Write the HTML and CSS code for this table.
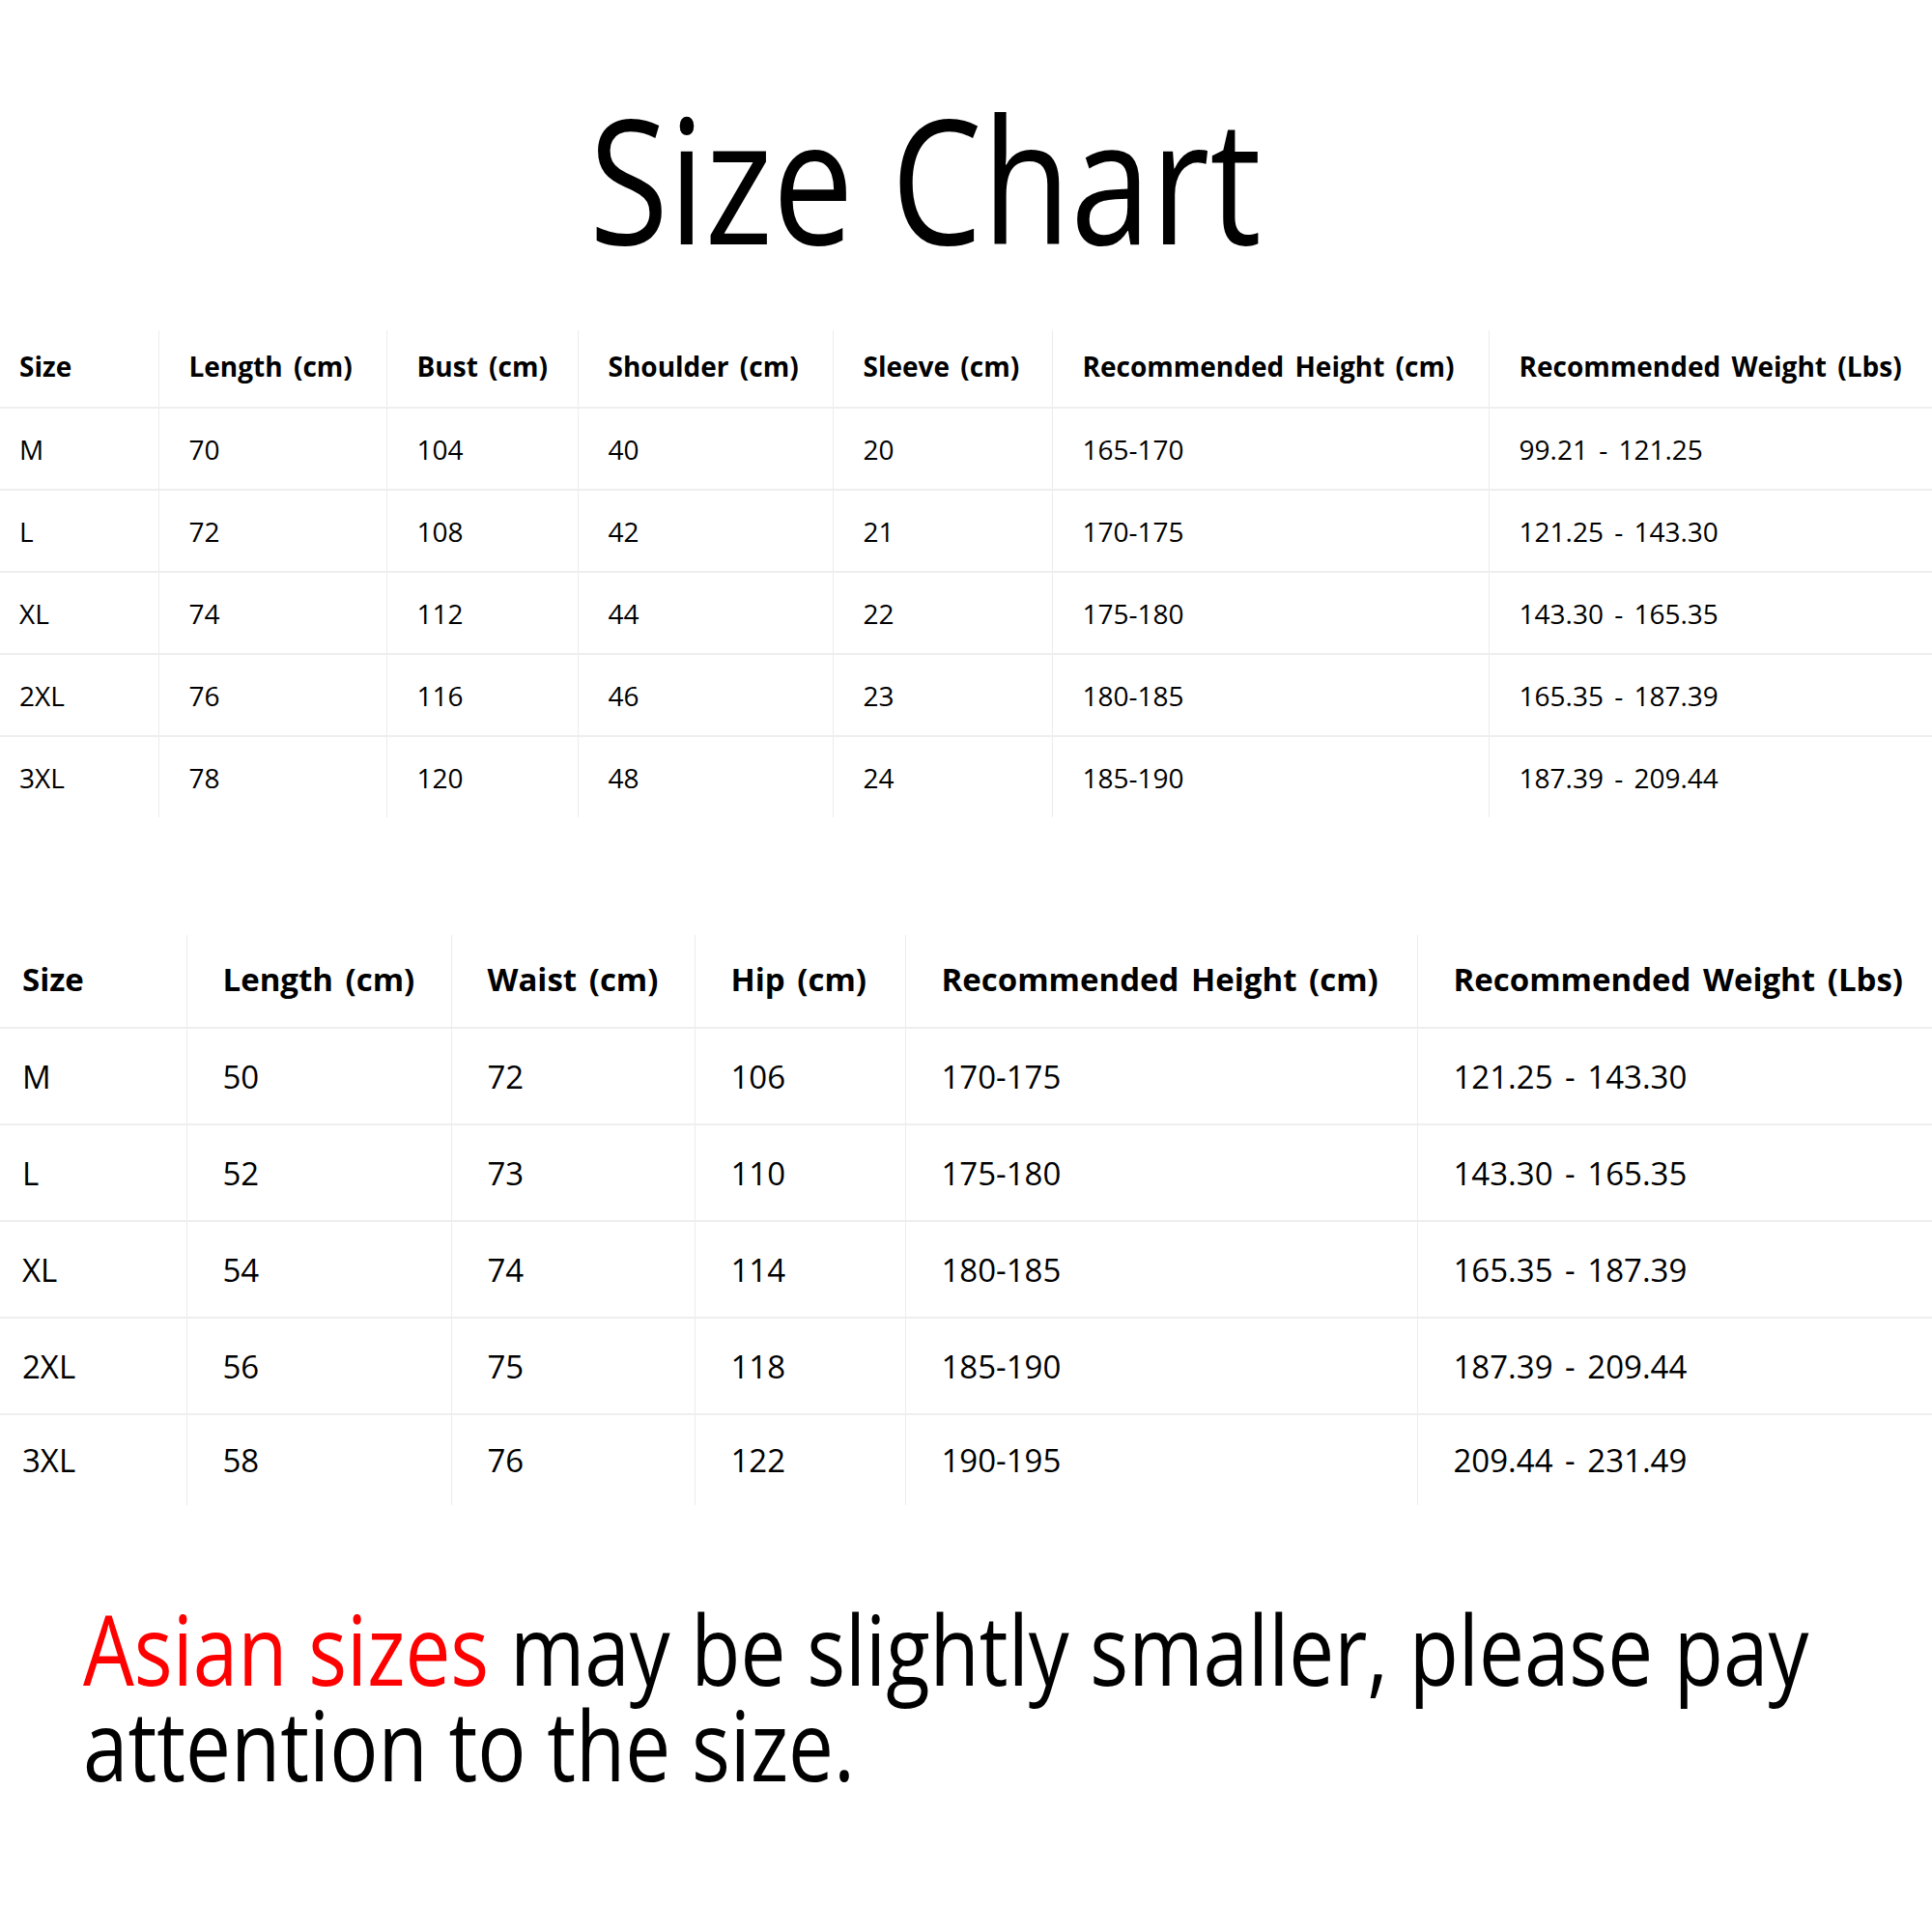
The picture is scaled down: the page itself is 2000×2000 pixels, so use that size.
FILE: index.html
```html
<!DOCTYPE html>
<html>
<head>
<meta charset="utf-8">
<link rel="stylesheet" href="styles.css">
</head>
<body>
<div class="page">
  <h1 class="title"><span class="squeeze">Size Chart</span></h1>

  <table class="chart chart-top">
    <tr class="head">
      <th>Size</th><th>Length (cm)</th><th>Bust (cm)</th><th>Shoulder (cm)</th><th>Sleeve (cm)</th><th>Recommended Height (cm)</th><th>Recommended Weight (Lbs)</th>
    </tr>
    <tr><td>M</td><td>70</td><td>104</td><td>40</td><td>20</td><td>165-170</td><td>99.21 - 121.25</td></tr>
    <tr><td>L</td><td>72</td><td>108</td><td>42</td><td>21</td><td>170-175</td><td>121.25 - 143.30</td></tr>
    <tr><td>XL</td><td>74</td><td>112</td><td>44</td><td>22</td><td>175-180</td><td>143.30 - 165.35</td></tr>
    <tr><td>2XL</td><td>76</td><td>116</td><td>46</td><td>23</td><td>180-185</td><td>165.35 - 187.39</td></tr>
    <tr class="last"><td>3XL</td><td>78</td><td>120</td><td>48</td><td>24</td><td>185-190</td><td>187.39 - 209.44</td></tr>
  </table>

  <table class="chart chart-bottom">
    <tr class="head">
      <th>Size</th><th>Length (cm)</th><th>Waist (cm)</th><th>Hip (cm)</th><th>Recommended Height (cm)</th><th>Recommended Weight (Lbs)</th>
    </tr>
    <tr><td>M</td><td>50</td><td>72</td><td>106</td><td>170-175</td><td>121.25 - 143.30</td></tr>
    <tr><td>L</td><td>52</td><td>73</td><td>110</td><td>175-180</td><td>143.30 - 165.35</td></tr>
    <tr><td>XL</td><td>54</td><td>74</td><td>114</td><td>180-185</td><td>165.35 - 187.39</td></tr>
    <tr><td>2XL</td><td>56</td><td>75</td><td>118</td><td>185-190</td><td>187.39 - 209.44</td></tr>
    <tr class="last"><td>3XL</td><td>58</td><td>76</td><td>122</td><td>190-195</td><td>209.44 - 231.49</td></tr>
  </table>

  <p class="note"><span class="squeeze"><span class="red">Asian sizes</span> may be slightly smaller, please pay<br>attention to the size.</span></p>
</div>
</body>
</html>
```

FILE: styles.css
```css
html, body {
  margin: 0;
  padding: 0;
  background: #ffffff;
}

body {
  font-family: "Open Sans", "Noto Sans", "Liberation Sans", sans-serif;
  color: #000000;
}

.page {
  width: 2000px;
  padding-top: 94px;
  padding-bottom: 60px;
  overflow: hidden;
}

.title {
  margin: 0;
  padding-left: 610px;
  font-size: 179px;
  line-height: 179px;
  font-weight: 400;
  white-space: nowrap;
}

.title .squeeze {
  display: inline-block;
  transform: scaleX(0.835);
  transform-origin: left center;
}

.chart {
  width: 2000px;
  border-collapse: collapse;
  table-layout: fixed;
}

.chart th,
.chart td {
  box-sizing: border-box;
  text-align: left;
  vertical-align: middle;
  padding: 0;
  white-space: nowrap;
  word-spacing: 4px;
}

.chart th + th,
.chart td + td {
  border-left: 1px solid #ececec;
}

.chart tr {
  border-bottom: 2px solid #eeeeee;
}

.chart tr.last {
  border-bottom: none;
}

.chart th {
  font-weight: 700;
}

/* top table */
.chart-top {
  margin-top: 69px;
  font-size: 28px;
}

.chart-top .head {
  height: 80px;
}

.chart-top tr {
  height: 85px;
}

.chart-top tr.last {
  height: 84px;
}

.chart-top th,
.chart-top td {
  padding-left: 31px;
}

.chart-top th {
  padding-bottom: 6px;
}

.chart-top th:first-child,
.chart-top td:first-child {
  padding-left: 20px;
}

.chart-top th:nth-child(1) { width: 164px; }
.chart-top th:nth-child(2) { width: 236px; }
.chart-top th:nth-child(3) { width: 198px; }
.chart-top th:nth-child(4) { width: 264px; }
.chart-top th:nth-child(5) { width: 227px; }
.chart-top th:nth-child(6) { width: 452px; }
.chart-top th:nth-child(7) { width: 459px; }

/* bottom table */
.chart-bottom {
  margin-top: 122px;
  font-size: 33px;
}

.chart-bottom .head {
  height: 96px;
}

.chart-bottom tr {
  height: 100px;
}

.chart-bottom tr.last {
  height: 94px;
}

.chart-bottom th,
.chart-bottom td {
  padding-left: 37px;
}

.chart-bottom th {
  padding-bottom: 4px;
}

.chart-bottom th:first-child,
.chart-bottom td:first-child {
  padding-left: 23px;
}

.chart-bottom th:nth-child(1) { width: 193px; }
.chart-bottom th:nth-child(2) { width: 274px; }
.chart-bottom th:nth-child(3) { width: 252px; }
.chart-bottom th:nth-child(4) { width: 218px; }
.chart-bottom th:nth-child(5) { width: 530px; }
.chart-bottom th:nth-child(6) { width: 533px; }

/* note */
.note {
  margin: 99px 0 0 0;
  padding-left: 86px;
  font-size: 100px;
  line-height: 99px;
  white-space: nowrap;
}

.note .squeeze {
  display: inline-block;
  transform: scaleX(0.836);
  transform-origin: left top;
}

.red {
  color: #ff0000;
}
```
